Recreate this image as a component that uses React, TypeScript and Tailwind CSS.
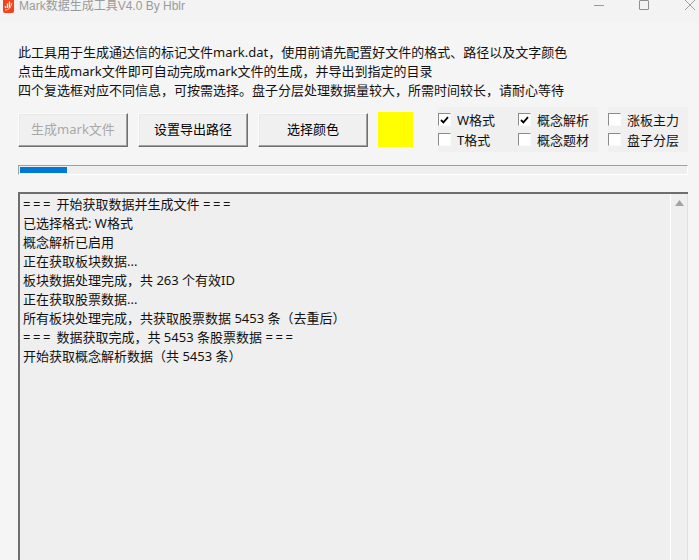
import React from "react";

const FONT = "font-['Noto_Sans','Noto_Sans_CJK_SC',sans-serif]";

const logLines = [
  ["===", " 开始获取数据并生成文件 ", "==="],
  ["", "已选择格式: W格式", ""],
  ["", "概念解析已启用", ""],
  ["", "正在获取板块数据...", ""],
  ["", "板块数据处理完成，共 263 个有效ID", ""],
  ["", "正在获取股票数据...", ""],
  ["", "所有板块处理完成，共获取股票数据 5453 条（去重后）", ""],
  ["===", " 数据获取完成，共 5453 条股票数据 ", "==="],
  ["", "开始获取概念解析数据（共 5453 条）", ""],
];

const Check = ({ label, checked }: { label: string; checked?: boolean }) => (
  <div className="flex items-center gap-[6px] h-[13px]">
    <span className="w-[13px] h-[13px] shrink-0 bg-white border-t border-l border-[#8a8a8a] border-r border-b border-r-[#fafafa] border-b-[#fafafa] flex items-center justify-center">
      {checked && (
        <svg width="9" height="8" viewBox="0 0 9 8">
          <path d="M1 4 L3.4 6.4 L8 1.2" fill="none" stroke="#000" strokeWidth="1.8" />
        </svg>
      )}
    </span>
    <span className="text-[13px] leading-[14px] text-[#111] whitespace-nowrap">{label}</span>
  </div>
);

const Btn = ({ label, disabled }: { label: string; disabled?: boolean }) => (
  <button
    className={`w-[110px] h-[34px] pt-[1px] bg-[#f0f0f0] border border-t-[#fbfbfb] border-l-[#fbfbfb] border-r-[#707070] border-b-[#707070] shadow-[inset_-1px_-1px_0_#a0a0a0,inset_1px_1px_0_#e8e8e8] text-[13px] ${
      disabled ? "text-[#a8a8a8]" : "text-black"
    }`}
  >
    {label}
  </button>
);

export default function App() {
  return (
    <div className={`w-[699px] h-[560px] overflow-hidden bg-[#f5f5f5] flex flex-col ${FONT}`}>
      {/* title bar, top is cut off in the shot */}
      <div className="h-[22px] shrink-0 bg-[#f3f3f3] flex items-start pl-[3px]">
        <svg width="11" height="13" viewBox="0 0 11 13" className="shrink-0">
          <rect x="0" y="-3" width="11" height="16" rx="2" fill="#f4431c" />
          <path d="M2.5 8 V6 M4.5 8 V3.5 M6.5 8 V1.5" stroke="#fff" strokeWidth="1.3" />
          <path d="M2 10 Q7 10.5 9 3" stroke="#ffd2c4" strokeWidth="1" fill="none" />
        </svg>
        <span className="ml-[5px] text-[12px] leading-[13px] text-[#9a9a9a] whitespace-nowrap font-['Liberation_Sans','Noto_Sans_CJK_SC',sans-serif]">
          Mark数据生成工具V4.0 By Hblr
        </span>
        <div className="ml-auto flex items-start">
          <span className="w-[10px] h-px mt-[5px] bg-[#9a9a9a]" />
          <span className="w-[10px] h-[10px] ml-[35px] border border-[#8f8f8f] rounded-[1px]" />
          <svg width="10" height="10" viewBox="0 0 10 10" className="ml-[36px] mr-[4px]">
            <path d="M0 0 L10 10 M10 0 L0 10" stroke="#a0a0a0" strokeWidth="1" />
          </svg>
        </div>
      </div>

      <div className="flex-1 min-h-0 flex flex-col pl-[18px] pr-[11px]">
        <div className="mt-[21px] text-[13px] leading-[19px] text-[#111] whitespace-nowrap">
          <p>此工具用于生成通达信的标记文件mark.dat，使用前请先配置好文件的格式、路径以及文字颜色</p>
          <p>点击生成mark文件即可自动完成mark文件的生成，并导出到指定的目录</p>
          <p>四个复选框对应不同信息，可按需选择。盘子分层处理数据量较大，所需时间较长，请耐心等待</p>
        </div>

        <div className="mt-[7px] flex items-center h-[45px]">
          <div className="flex gap-[10px]">
            <Btn label="生成mark文件" disabled />
            <Btn label="设置导出路径" />
            <Btn label="选择颜色" />
          </div>
          <div className="ml-[10px] w-[35px] h-[35px] bg-[#ffff00]" />
          <div className="ml-[25px] w-[160px] h-[45px] bg-[#f0f0f0] grid grid-cols-[80px_80px] content-center gap-y-[7px]">
            <Check label="W格式" checked />
            <Check label="概念解析" checked />
            <Check label="T格式" />
            <Check label="概念题材" />
          </div>
          <div className="ml-[10px] w-[80px] h-[45px] bg-[#f0f0f0] flex flex-col justify-center gap-[7px]">
            <Check label="涨板主力" />
            <Check label="盘子分层" />
          </div>
        </div>

        {/* progress */}
        <div className="mt-[13px] w-[670px] h-[10px] shrink-0 bg-[#efefef] border-t border-l border-[#a0a0a0] border-r border-b border-r-white border-b-white pl-[1px] pt-px">
          <div className="w-[47px] h-[6px] bg-[#0078d7]" />
        </div>

        {/* log box */}
        <div className="mt-[17px] w-[670px] flex-1 min-h-0 bg-[#efefef] border-t-2 border-l-2 border-[#6e6e6e] flex">
          <div className="flex-1 pl-[3px] pt-[1px] text-[13px] leading-[19px] text-[#111] whitespace-pre">
            {logLines.map(([a, mid, b]) => (
              <div key={mid}>
                {a && <span className="tracking-[2.6px]">{a}</span>}
                {mid}
                {b && <span className="tracking-[2.6px]">{b}</span>}
              </div>
            ))}
          </div>
          <div className="w-[18px] shrink-0 border-l border-r border-l-white border-r-[#e0e0e0] flex justify-center pt-[6px]">
            <svg width="9" height="6" viewBox="0 0 9 6">
              <path d="M4.5 0 L9 6 H0 Z" fill="#a3a3a3" />
            </svg>
          </div>
        </div>
      </div>
    </div>
  );
}
